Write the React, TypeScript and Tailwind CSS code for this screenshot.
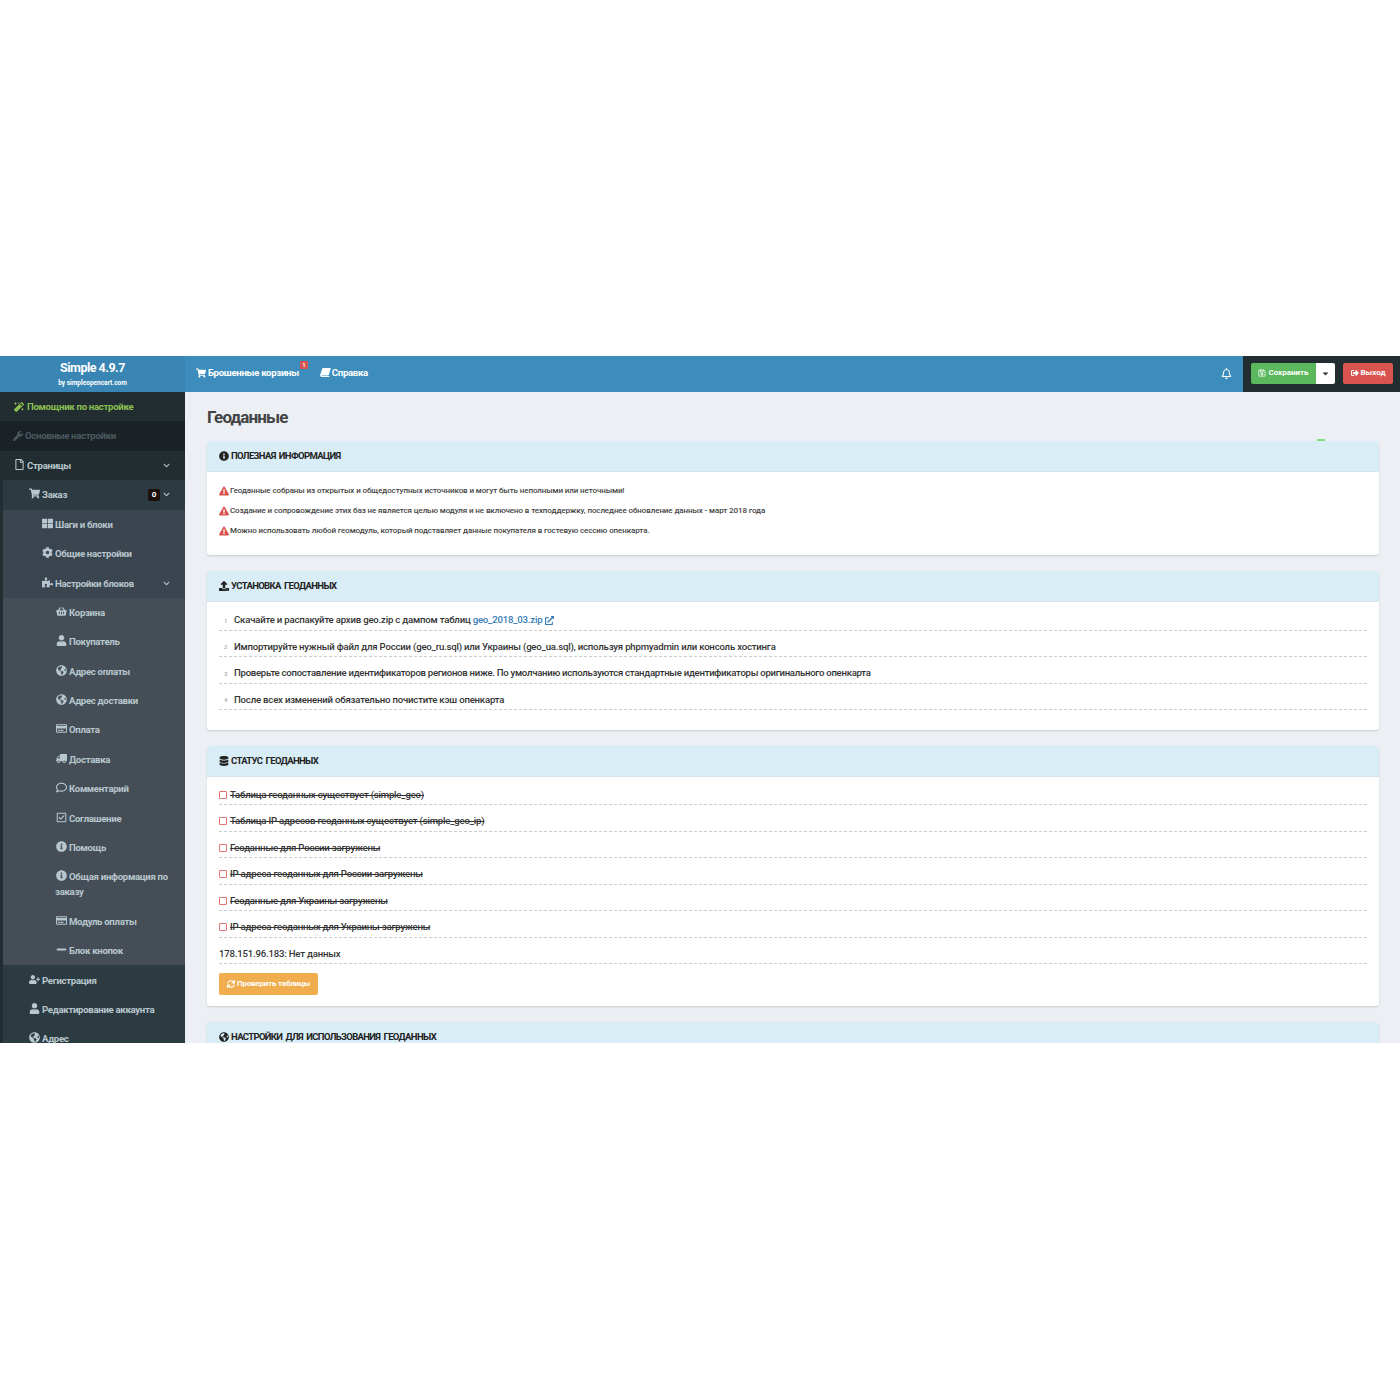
import type { ReactNode } from "react"
import {
  FaCaretDown, FaChevronDown, FaCog, FaDatabase, FaExclamationTriangle, FaExternalLinkAlt,
  FaGlobeAmericas, FaInfoCircle, FaMagic, FaMinus, FaPuzzlePiece, FaRegBell, FaRegCheckSquare, FaRegComment,
  FaRegCreditCard, FaRegFile, FaRegSave, FaShoppingBasket, FaShoppingCart, FaSignOutAlt, FaSync, FaThLarge,
  FaTruck, FaUpload, FaUser, FaUserPlus, FaWrench,
} from "react-icons/fa"

type Item = { label: string; icon: ReactNode; chevron?: boolean; badge?: string; tall?: boolean }

const level2: Item[] = [
  { label: "Шаги и блоки", icon: <FaThLarge /> },
  { label: "Общие настройки", icon: <FaCog /> },
  { label: "Настройки блоков", icon: <FaPuzzlePiece />, chevron: true },
]

const level3: Item[] = [
  { label: "Корзина", icon: <FaShoppingBasket /> },
  { label: "Покупатель", icon: <FaUser /> },
  { label: "Адрес оплаты", icon: <FaGlobeAmericas /> },
  { label: "Адрес доставки", icon: <FaGlobeAmericas /> },
  { label: "Оплата", icon: <FaRegCreditCard /> },
  { label: "Доставка", icon: <FaTruck className="-scale-x-100" /> },
  { label: "Комментарий", icon: <FaRegComment /> },
  { label: "Соглашение", icon: <FaRegCheckSquare /> },
  { label: "Помощь", icon: <FaInfoCircle /> },
  { label: "Общая информация по заказу", icon: <FaInfoCircle />, tall: true },
  { label: "Модуль оплаты", icon: <FaRegCreditCard /> },
  { label: "Блок кнопок", icon: <FaMinus /> },
]

const level1After: Item[] = [
  { label: "Регистрация", icon: <FaUserPlus /> },
  { label: "Редактирование аккаунта", icon: <FaUser /> },
  { label: "Адрес", icon: <FaGlobeAmericas /> },
]

const alerts = [
  "Геоданные собраны из открытых и общедоступных источников и могут быть неполными или неточными!",
  "Создание и сопровождение этих баз не является целью модуля и не включено в техподдержку, последнее обновление данных - март 2018 года",
  "Можно использовать любой геомодуль, который подставляет данные покупателя в гостевую сессию опенкарта.",
]

const checks = [
  "Таблица геоданных существует (simple_geo)",
  "Таблица IP адресов геоданных существует (simple_geo_ip)",
  "Геоданные для России загружены",
  "IP адреса геоданных для России загружены",
  "Геоданные для Украины загружены",
  "IP адреса геоданных для Украины загружены",
]

function BookIcon() {
  return (
    <svg viewBox="0 0 12 10" className="h-[9px] w-[11px]" fill="currentColor">
      <path d="M3 0h8.5c.4 0 .5.3.4.6L9.8 7.5c-.2.5-.5.7-1 .7H1.9c-.5 0-.6.3-.3.5.2.2.5.3 1 .3h7.2l.6-.1-.3 1H2C.8 10 0 9 0 8c0-.3.1-.5.2-.9L2.3.8C2.5.3 2.7 0 3 0z" />
    </svg>
  )
}

function SideRow({ item, pad }: { item: Item; pad: string }) {
  return (
    <div className={`flex items-center ${pad} pr-[15px] ${item.tall ? "h-[44.4px]" : "h-[29.4px]"}`}>
      <div className="flex-1 leading-[15px]">
        <span className="mr-[1px] inline-flex w-[13px] justify-center align-[-1px] text-[11px]">{item.icon}</span>
        {item.label}
      </div>
      {item.badge && (
        <span className="mr-[3px] mt-[1px] rounded-[2px] bg-[#1c0f0c] px-[4px] text-[8px] leading-[12px] text-white">{item.badge}</span>
      )}
      {item.chevron && <FaChevronDown className="text-[7px]" />}
    </div>
  )
}

function Sidebar() {
  return (
    <aside className="w-[185px] shrink-0 bg-[#222d32] text-[9.6px] font-bold tracking-[-0.3px] text-[#b8c7ce]">
      <div className="flex h-[29.4px] items-center gap-[3px] bg-[#222d32] pl-[14px] text-[#8cc152]">
        <FaMagic className="text-[10px]" />
        <span>Помощник по настройке</span>
      </div>
      <div className="flex h-[29.4px] items-center gap-[2px] bg-[#1a2226] pl-[13px] text-[#4b5b62]">
        <FaWrench className="text-[10px]" />
        <span>Основные настройки</span>
      </div>
      <SideRow item={{ label: "Страницы", icon: <FaRegFile />, chevron: true }} pad="pl-[13px]" />
      <div className="ml-[3px] bg-[#2c3b41]">
        <SideRow item={{ label: "Заказ", icon: <FaShoppingCart />, chevron: true, badge: "0" }} pad="pl-[25px]" />
        <div className="bg-[#3b454f]">
          {level2.map((i) => (
            <SideRow key={i.label} item={i} pad="pl-[38px]" />
          ))}
          <div className="bg-[#454e56]">
            {level3.map((i) => (
              <SideRow key={i.label} item={i} pad="pl-[52px]" />
            ))}
          </div>
        </div>
        {level1After.map((i) => (
          <SideRow key={i.label} item={i} pad="pl-[25px]" />
        ))}
      </div>
    </aside>
  )
}

function Panel({ icon, title, children, bodyClass }: { icon: ReactNode; title: string; children?: ReactNode; bodyClass?: string }) {
  return (
    <section className="mb-[16px] rounded-[3px] bg-white shadow-[0_1px_2px_rgba(0,0,0,0.15)]">
      <h2 className="flex h-[30.5px] items-center gap-[2px] rounded-t-[3px] border-b border-[#d5e2ea] bg-[#d9edf7] px-[12px] text-[9.5px] font-bold uppercase tracking-[-0.65px] text-[#222] [word-spacing:1.5px]">
        <span className="text-[10px]">{icon}</span>
        {title}
      </h2>
      <div className={bodyClass}>{children}</div>
    </section>
  )
}

function Row({ children, tight }: { children: ReactNode; tight?: boolean }) {
  return (
    <div className={`flex h-[26.5px] items-center border-b border-dashed border-[#ccc] pt-[7px] text-[9.6px] font-medium text-[#333] ${tight ? "tracking-[-0.28px]" : "tracking-[-0.2px]"}`}>
      {children}
    </div>
  )
}

function Num({ n }: { n: number }) {
  return <span className="w-[15px] pl-[5px] text-[6px] text-[#aaa]">{n}</span>
}

export default function App() {
  return (
    <div className="min-h-[1400px] bg-white pt-[356px] font-['Roboto',sans-serif]">
      <div className="h-[687px] overflow-hidden">
        <header className="flex h-[36px]">
          <div className="flex w-[185px] shrink-0 flex-col items-center bg-[#3985b3] pt-[4px] font-bold text-white">
            <div className="text-[12.5px] leading-[16px] tracking-[-0.5px]">Simple 4.9.7</div>
            <div className="mt-[2px] text-[6.5px] leading-[10px]">by simpleopencart.com</div>
          </div>
          <div className="flex flex-1 items-center bg-[#3c8dbc] pb-[2px] text-[9.6px] font-bold tracking-[-0.3px] text-white">
            <span className="relative ml-[11px] flex items-center gap-[2px]">
              <FaShoppingCart className="text-[10px]" /> Брошенные корзины
              <span className="absolute -right-[9px] -top-[5px] rounded-[1px] bg-[#d9534f] px-[2px] text-[6px] leading-[8px] tracking-normal">1</span>
            </span>
            <span className="ml-[21px] flex items-center gap-[1px]">
              <BookIcon /> Справка
            </span>
            <FaRegBell className="ml-auto mr-[11px] text-[11px]" />
          </div>
          <div className="flex w-[157px] shrink-0 items-center bg-[#222d32] pb-[2px] pl-[8px] text-[8px] font-bold text-white">
            <button className="flex h-[21px] w-[65px] items-center justify-center gap-[2px] rounded-l-[2px] bg-[#5cb85c]">
              <FaRegSave className="text-[8px]" /> Сохранить
            </button>
            <button className="flex h-[21px] w-[19px] items-center justify-center rounded-r-[2px] bg-white text-[#333]">
              <FaCaretDown className="text-[9px]" />
            </button>
            <button className="ml-[8px] flex h-[21px] w-[50px] items-center justify-center gap-[2px] rounded-[2px] bg-[#d9534f]">
              <FaSignOutAlt className="text-[8px]" /> Выход
            </button>
          </div>
        </header>
        <div className="flex h-[651px]">
          <Sidebar />
          <main className="relative flex-1 bg-[#ecf0f5] pl-[22px] pr-[21px]">
            <h1 className="h-[49px] pt-[14px] text-[17px] font-bold leading-[22px] tracking-[-0.9px] text-[#444]">Геоданные</h1>
            <span className="absolute left-[1132px] top-[47px] h-[2px] w-[8px] bg-[#7be37b]" />
            <Panel icon={<FaInfoCircle />} title="Полезная информация" bodyClass="h-[83.5px] px-[12px] pt-[9px]">
              {alerts.map((a) => (
                <div key={a} className="flex h-[20.2px] items-center gap-[1px] text-[8px] font-medium tracking-[-0.1px] text-[#444]">
                  <FaExclamationTriangle className="text-[10px] text-[#d9534f]" />
                  {a}
                </div>
              ))}
            </Panel>
            <Panel icon={<FaUpload />} title="Установка геоданных" bodyClass="h-[128.5px] px-[12px] pt-[2.5px]">
              <Row>
                <Num n={1} />
                Скачайте и распакуйте архив geo.zip с дампом таблиц&nbsp;
                <span className="text-[#337ab7]">geo_2018_03.zip</span>
                <FaExternalLinkAlt className="ml-[3px] text-[9px] text-[#337ab7]" />
              </Row>
              <Row>
                <Num n={2} />
                Импортируйте нужный файл для России (geo_ru.sql) или Украины (geo_ua.sql), используя phpmyadmin или консоль хостинга
              </Row>
              <Row tight>
                <Num n={3} />
                Проверьте сопоставление идентификаторов регионов ниже. По умолчанию используются стандартные идентификаторы оригинального опенкарта
              </Row>
              <Row>
                <Num n={4} />
                После всех изменений обязательно почистите кэш опенкарта
              </Row>
            </Panel>
            <Panel icon={<FaDatabase />} title="Статус геоданных" bodyClass="h-[229.5px] px-[12px] pt-[2px]">
              {checks.map((c) => (
                <Row key={c}>
                  <span className="mr-[3px] h-[8px] w-[8px] rounded-[1px] border border-[#e57373] bg-white" />
                  <span className="line-through">{c}</span>
                </Row>
              ))}
              <Row>178.151.96.183: Нет данных</Row>
              <button className="mt-[9px] flex h-[22px] w-[99px] items-center justify-center gap-[2px] rounded-[2px] bg-[#f0ad4e] text-[8px] font-bold tracking-[-0.2px] text-white">
                <FaSync className="text-[8px]" /> Проверить таблицы
              </button>
            </Panel>
            <Panel icon={<FaGlobeAmericas />} title="Настройки для использования геоданных" />
          </main>
        </div>
      </div>
    </div>
  )
}
